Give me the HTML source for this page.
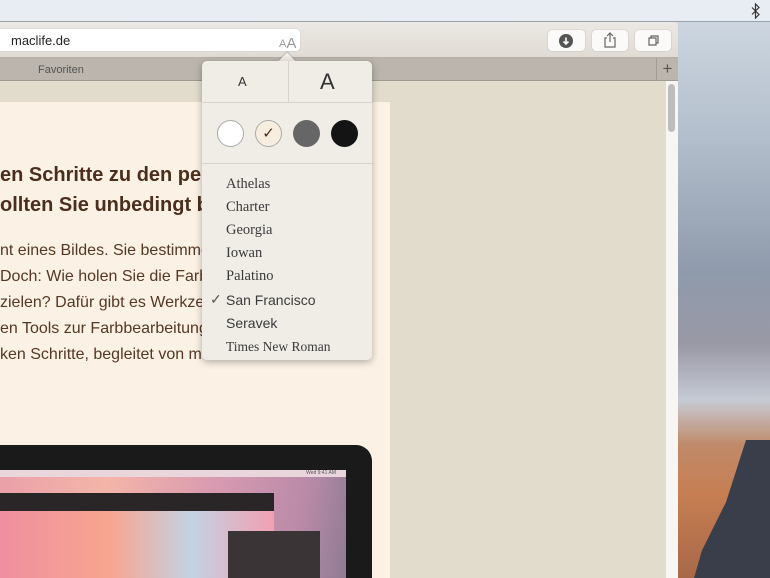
<!DOCTYPE html><html><head><style>
*{margin:0;padding:0;box-sizing:border-box}
body{width:770px;height:578px;overflow:hidden;position:relative;font-family:"Liberation Sans",sans-serif;background:#9aa6b4}
.abs{position:absolute}
.f{position:absolute;left:226px;font-family:'Liberation Serif',serif;font-size:14.5px;color:#3a3a3a;line-height:18px}
</style></head><body>
<div class="abs" style="left:0;top:0;width:770px;height:22px;background:#e8edf3;border-bottom:1px solid #9aa3ad"></div>
<svg class="abs" style="left:751px;top:3px" width="10" height="16"><path d="M1 4.5l7 7-3.5 3.5V1L8 4.5l-7 7" fill="none" stroke="#333" stroke-width="1.2"/></svg>
<!-- desktop -->
<div class="abs" style="left:678px;top:22px;width:92px;height:556px;background:linear-gradient(#cdd6e0 0%,#b3bfcc 20%,#8f9bac 45%,#9a99a6 58%,#c5cad3 68%,#c08a6a 76%,#c67e52 85%,#a86848 100%)"></div>
<div class="abs" style="left:690px;top:440px;width:80px;height:138px;background:#3a3e4a;clip-path:polygon(70% 0,100% 0,100% 100%,5% 100%,15% 80%,45% 45%)"></div>
<!-- window -->
<div class="abs" style="left:0;top:22px;width:678px;height:556px;background:#e2dccd"></div>
<div class="abs" style="left:0;top:22px;width:678px;height:36px;background:linear-gradient(#ece8e3,#e0dbd4);border-radius:0 5px 0 0;border-bottom:1px solid #b5afa7"></div>
<div class="abs" style="left:-6px;top:29px;width:306px;height:22px;background:#fff;border-radius:4px;box-shadow:0 0 1px #aaa"></div>
<div class="abs" style="left:11px;top:33px;font-size:13px;color:#222">maclife.de</div>
<div class="abs" style="left:279px;top:34px;font-size:11px;color:#999">A<span style="font-size:15px;position:relative;top:1px">A</span></div>
<div class="abs" style="left:548px;top:30px;width:37px;height:21px;background:#fbfaf8;border-radius:4px;box-shadow:0 0 1px #999"></div>
<div class="abs" style="left:559px;top:34px;width:14px;height:14px;border-radius:50%;background:#555"></div>
<svg class="abs" style="left:559px;top:34px" width="14" height="14"><path d="M7 3.5v6M4.5 7.5L7 10l2.5-2.5" fill="none" stroke="#fff" stroke-width="1.6"/></svg>
<div class="abs" style="left:592px;top:30px;width:36px;height:21px;background:#fbfaf8;border-radius:4px;box-shadow:0 0 1px #999"></div>
<svg class="abs" style="left:602px;top:31px" width="16" height="18"><path d="M5 7H3v9h10V7h-2M8 11V2M5 5l3-3 3 3" fill="none" stroke="#666" stroke-width="1.2"/></svg>
<div class="abs" style="left:635px;top:30px;width:36px;height:21px;background:#fbfaf8;border-radius:4px;box-shadow:0 0 1px #999"></div>
<svg class="abs" style="left:645px;top:33px" width="16" height="16"><path d="M4 5h7v7H4zM6 5V3h7v7h-2" fill="none" stroke="#666" stroke-width="1.2"/></svg>
<div class="abs" style="left:0;top:58px;width:678px;height:23px;background:#bbb5ad;border-bottom:1px solid #9e9890"></div>
<div class="abs" style="left:38px;top:64px;font-size:11px;color:#555">Favoriten</div>
<div class="abs" style="left:656px;top:58px;width:22px;height:23px;border-left:1px solid #a29c94;color:#555;font-size:17px;text-align:center;line-height:22px">+</div>
<!-- scrollbar -->
<div class="abs" style="left:665px;top:81px;width:13px;height:497px;background:#f7f6f3;border-left:1px solid #ddd"></div>
<div class="abs" style="left:668px;top:84px;width:7px;height:48px;background:#bdbdbd;border-radius:4px"></div>
<!-- page -->
<div class="abs" style="left:0;top:102px;width:390px;height:476px;background:#fbf2e5"></div>
<div class="abs" style="left:0;top:160px;font-size:20px;font-weight:bold;color:#4b2e1d;line-height:30px;white-space:nowrap">en Schritte zu den personalisierten<br>ollten Sie unbedingt beachten</div>
<div class="abs" style="left:0;top:238px;font-size:16px;color:#553724;line-height:26px;white-space:nowrap">nt eines Bildes. Sie bestimmen<br>Doch: Wie holen Sie die Farben<br>zielen? Dafür gibt es Werkzeuge<br>en Tools zur Farbbearbeitung<br>ken Schritte, begleitet von m</div>
<!-- image -->
<div class="abs" style="left:0;top:445px;width:372px;height:133px;background:#1a1a1a;border-radius:0 16px 0 0"></div>
<div class="abs" style="left:0;top:470px;width:346px;height:108px;background:linear-gradient(100deg,#e9a0a8,#f4b5a8 30%,#d89ab0 60%,#b98aa8 85%,#8f7b93)"></div>
<div class="abs" style="left:0;top:470px;width:346px;height:7px;background:#e9d6dc;font-size:5px;color:#555;text-align:right;padding-right:10px">Wed 9:41 AM</div>
<div class="abs" style="left:0;top:493px;width:274px;height:18px;background:#2a2526"></div>
<div class="abs" style="left:0;top:511px;width:274px;height:67px;background:linear-gradient(90deg,#f08fa0,#f7a58f 40%,#c3d2e4 70%,#f1a0b0)"></div>
<div class="abs" style="left:228px;top:531px;width:92px;height:47px;background:#3a3436"></div>
<!-- popover -->
<div class="abs" style="left:281px;top:55px;width:12px;height:12px;background:#f0ede6;transform:rotate(45deg);box-shadow:-1px -1px 1px rgba(0,0,0,.15)"></div>
<div class="abs" style="left:202px;top:61px;width:170px;height:299px;background:#f0ede6;border-radius:5px;box-shadow:0 2px 8px rgba(0,0,0,.3)"></div>
<div class="abs" style="left:202px;top:102px;width:170px;height:1px;background:#d8d4cc"></div>
<div class="abs" style="left:288px;top:61px;width:1px;height:41px;background:#d8d4cc"></div>
<div class="abs" style="left:238px;top:74px;font-size:13px;color:#333">A</div>
<div class="abs" style="left:320px;top:69px;font-size:22px;color:#333">A</div>
<div class="abs" style="left:217px;top:120px;width:27px;height:27px;border-radius:50%;background:#fff;border:1px solid #aaa"></div>
<div class="abs" style="left:255px;top:120px;width:27px;height:27px;border-radius:50%;background:#f8eee0;border:1px solid #aaa;text-align:center;line-height:25px;font-size:15px;color:#4b2e1d">&#x2713;</div>
<div class="abs" style="left:293px;top:120px;width:27px;height:27px;border-radius:50%;background:#666"></div>
<div class="abs" style="left:331px;top:120px;width:27px;height:27px;border-radius:50%;background:#141414"></div>
<div class="abs" style="left:202px;top:163px;width:170px;height:1px;background:#d8d4cc"></div>
<div class="f" style="top:175px">Athelas</div>
<div class="f" style="top:198px">Charter</div>
<div class="f" style="top:221px">Georgia</div>
<div class="f" style="top:244px">Iowan</div>
<div class="f" style="top:267px">Palatino</div>
<div class="f" style="top:291px;font-family:'Liberation Sans',sans-serif;font-size:14px">San Francisco</div>
<div class="f" style="top:314px;font-family:'Liberation Sans',sans-serif;font-size:14px">Seravek</div>
<div class="f" style="top:338px;font-size:13.5px">Times New Roman</div>
<div class="abs" style="left:210px;top:291px;font-size:14px;color:#555">&#x2713;</div>
</body></html>
